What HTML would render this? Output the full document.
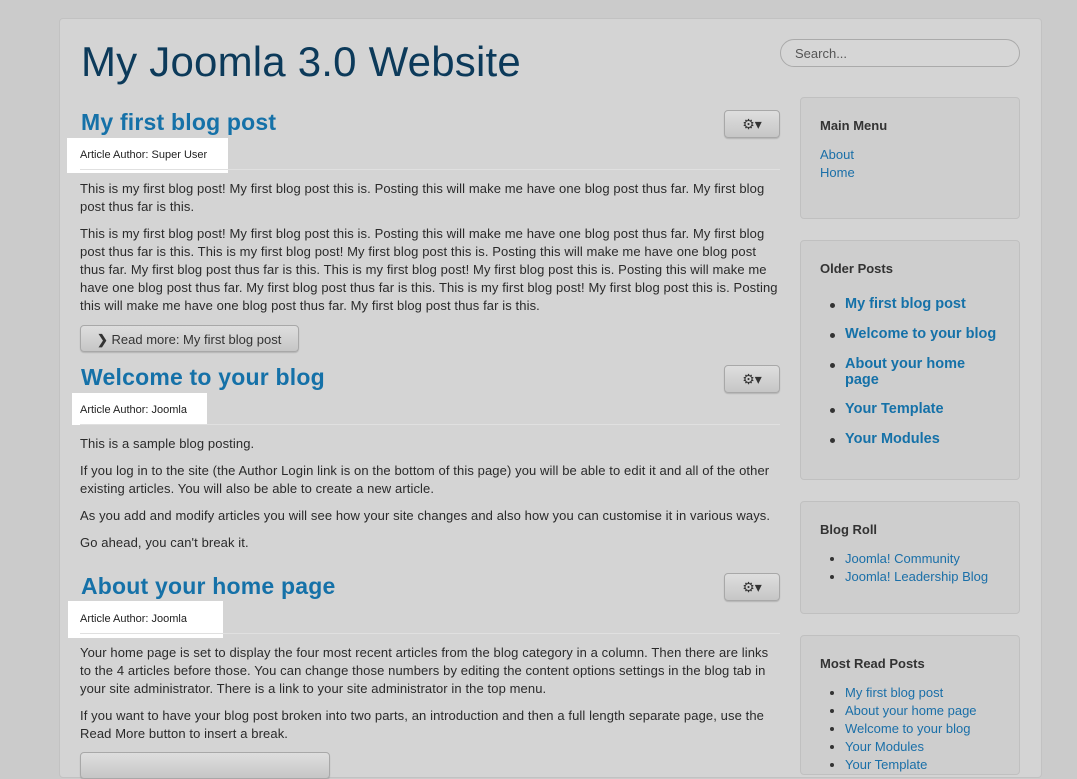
<!DOCTYPE html>
<html><head><meta charset="utf-8"><style>
*{margin:0;padding:0;box-sizing:border-box}
body{width:1077px;height:761px;overflow:hidden;background:#cbcbcb;font-family:"Liberation Sans",Arial,sans-serif;font-size:12px;color:#333;position:relative}
.ab{position:absolute;white-space:nowrap}
#cont{position:absolute;left:59px;top:18px;width:983px;height:760px;background:#d4d4d4;border:1px solid #c2c2c2;border-radius:4px}
.title{left:81px;top:38px;font-size:42px;color:#0c3a5a;letter-spacing:0.2px}
.h2{font-size:23px;color:#1571a8;font-weight:bold;left:81px;letter-spacing:0.2px}
.auth{background:#fff;font-size:11px;color:#222;padding-left:13px;line-height:1}
.hr{left:80px;width:700px;height:1px;background:#c0c0c0;border-bottom:1px solid #e0e0e0}
.p{left:80px;width:700px;line-height:18px;white-space:normal;color:#2a2a2a;font-size:13px;letter-spacing:0.1px}
.btn{background:linear-gradient(#dedede,#c6c6c6);border:1px solid #a8a8a8;border-radius:4px;box-shadow:0 1px 1px rgba(0,0,0,.15)}
.gear{left:724px;width:56px;height:28px;font-size:14px;color:#333;text-align:center;line-height:26px}
.well{left:800px;width:220px;background:#cecece;border:1px solid #c0c0c0;border-radius:4px}
.wt{font-weight:bold;font-size:13px;color:#333;left:820px}
.lk{color:#1a6fa8;font-size:13px}
.ol{font-weight:bold;font-size:14.5px;color:#1571a8;left:845px}
.dot{width:5px;height:5px;border-radius:50%;background:#333;position:absolute}
</style></head><body>
<div id="cont"></div>
<div class="ab title">My Joomla 3.0 Website</div>
<div class="ab" style="left:780px;top:39px;width:240px;height:28px;border:1px solid #aaa;border-radius:14px;background:#d6d6d6;padding:6px 14px;color:#555;font-size:13px">Search...</div>

<div class="ab h2" style="top:109px">My first blog post</div>
<div class="ab btn gear" style="top:110px">&#9881;&#9662;</div>
<div class="ab auth" style="left:67px;top:138px;width:161px;height:35px;padding-top:12px">Article Author: Super User</div>
<div class="ab hr" style="top:169px"></div>
<div class="ab p" style="top:180px">This is my first blog post! My first blog post this is. Posting this will make me have one blog post thus far. My first blog post thus far is this.</div>
<div class="ab p" style="top:225px">This is my first blog post! My first blog post this is. Posting this will make me have one blog post thus far. My first blog post thus far is this. This is my first blog post! My first blog post this is. Posting this will make me have one blog post thus far. My first blog post thus far is this. This is my first blog post! My first blog post this is. Posting this will make me have one blog post thus far. My first blog post thus far is this. This is my first blog post! My first blog post this is. Posting this will make me have one blog post thus far. My first blog post thus far is this.</div>
<div class="ab btn" style="left:80px;top:325px;width:219px;height:27px;font-size:13px;padding:6px 0 0 16px;color:#333"><b>&#x276F;</b> Read more: My first blog post</div>

<div class="ab h2" style="top:364px">Welcome to your blog</div>
<div class="ab btn gear" style="top:365px">&#9881;&#9662;</div>
<div class="ab auth" style="left:72px;top:393px;width:135px;height:32px;padding-left:8px;padding-top:12px">Article Author: Joomla</div>
<div class="ab hr" style="top:424px"></div>
<div class="ab p" style="top:435px">This is a sample blog posting.</div>
<div class="ab p" style="top:462px">If you log in to the site (the Author Login link is on the bottom of this page) you will be able to edit it and all of the other existing articles. You will also be able to create a new article.</div>
<div class="ab p" style="top:507px">As you add and modify articles you will see how your site changes and also how you can customise it in various ways.</div>
<div class="ab p" style="top:534px">Go ahead, you can't break it.</div>

<div class="ab h2" style="top:573px">About your home page</div>
<div class="ab btn gear" style="top:573px">&#9881;&#9662;</div>
<div class="ab auth" style="left:68px;top:601px;width:155px;height:37px;padding-left:12px;padding-top:13px">Article Author: Joomla</div>
<div class="ab hr" style="top:633px"></div>
<div class="ab p" style="top:644px">Your home page is set to display the four most recent articles from the blog category in a column. Then there are links to the 4 articles before those. You can change those numbers by editing the content options settings in the blog tab in your site administrator. There is a link to your site administrator in the top menu.</div>
<div class="ab p" style="top:707px">If you want to have your blog post broken into two parts, an introduction and then a full length separate page, use the Read More button to insert a break.</div>
<div class="ab btn" style="left:80px;top:752px;width:250px;height:27px"></div>

<div class="ab well" style="top:97px;height:122px"></div>
<div class="ab wt" style="top:118px">Main Menu</div>
<div class="ab lk" style="left:820px;top:147px">About</div>
<div class="ab lk" style="left:820px;top:165px">Home</div>

<div class="ab well" style="top:240px;height:240px"></div>
<div class="ab wt" style="top:261px">Older Posts</div>
<div class="dot" style="left:830px;top:303px"></div><div class="ab ol" style="top:296px">My first blog post</div>
<div class="dot" style="left:830px;top:333px"></div><div class="ab ol" style="top:326px">Welcome to your blog</div>
<div class="dot" style="left:830px;top:363px"></div><div class="ab ol" style="top:356px;line-height:16px">About your home<br>page</div>
<div class="dot" style="left:830px;top:408px"></div><div class="ab ol" style="top:401px">Your Template</div>
<div class="dot" style="left:830px;top:438px"></div><div class="ab ol" style="top:431px">Your Modules</div>

<div class="ab well" style="top:501px;height:113px"></div>
<div class="ab wt" style="top:522px">Blog Roll</div>
<div class="dot" style="left:830px;top:557px;width:4px;height:4px"></div><div class="ab lk" style="left:845px;top:551px">Joomla! Community</div>
<div class="dot" style="left:830px;top:575px;width:4px;height:4px"></div><div class="ab lk" style="left:845px;top:569px">Joomla! Leadership Blog</div>

<div class="ab well" style="top:635px;height:140px"></div>
<div class="ab wt" style="top:656px">Most Read Posts</div>
<div class="dot" style="left:830px;top:691px;width:4px;height:4px"></div><div class="ab lk" style="left:845px;top:685px">My first blog post</div>
<div class="dot" style="left:830px;top:709px;width:4px;height:4px"></div><div class="ab lk" style="left:845px;top:703px">About your home page</div>
<div class="dot" style="left:830px;top:727px;width:4px;height:4px"></div><div class="ab lk" style="left:845px;top:721px">Welcome to your blog</div>
<div class="dot" style="left:830px;top:745px;width:4px;height:4px"></div><div class="ab lk" style="left:845px;top:739px">Your Modules</div>
<div class="dot" style="left:830px;top:763px;width:4px;height:4px"></div><div class="ab lk" style="left:845px;top:757px">Your Template</div>
</body></html>
